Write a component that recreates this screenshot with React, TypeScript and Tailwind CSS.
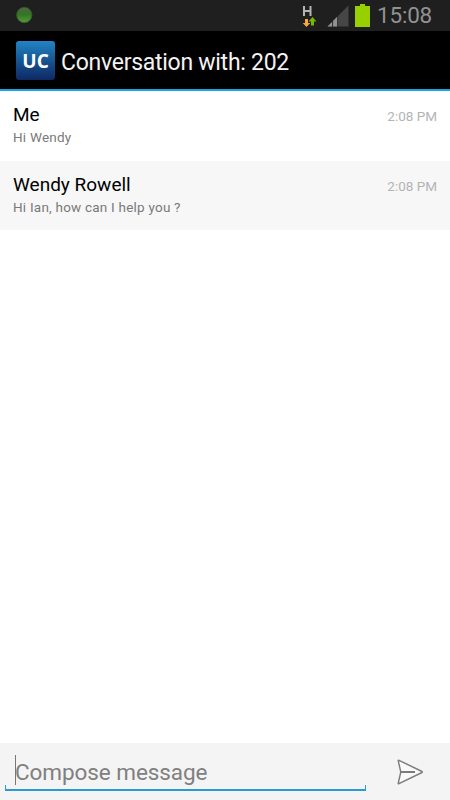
import React from 'react'

type Message = {
  sender: string
  text: string
  time: string
}

const messages: Message[] = [
  { sender: 'Me', text: 'Hi Wendy', time: '2:08 PM' },
  { sender: 'Wendy Rowell', text: 'Hi Ian, how can I help you ?', time: '2:08 PM' },
]

function StatusBar() {
  return (
    <div className="flex h-[31px] shrink-0 items-start bg-[#1f1f1f]">
      <svg className="mt-[6px] ml-[15px] h-[18px] w-[18px]" viewBox="0 0 18 18">
        <defs>
          <linearGradient id="online" x1="0" y1="0" x2="0" y2="1">
            <stop offset="0" stopColor="#50654a" />
            <stop offset="0.45" stopColor="#347426" />
            <stop offset="1" stopColor="#529c37" />
          </linearGradient>
        </defs>
        <circle cx="9.3" cy="9" r="7.7" fill="url(#online)" stroke="#2b5923" strokeWidth="0.8" />
      </svg>

      {/* HSPA data */}
      <svg className="mt-[3px] ml-auto h-6 w-4" viewBox="0 0 16 24">
        <path d="M2 3v10M8.500 3v10M2 8h6.500" fill="none" stroke="#b4b4b4" strokeWidth="2" />
        <path d="M3 16h3v4h2.300l-3.800 4L0.700 20H3z" fill="#fca43a" />
        <path d="M10.500 14l4 4.400h-2.500v4H9v-4H6.500z" fill="#77b800" />
      </svg>

      <svg className="mt-[5px] ml-[9px] h-[22px] w-[22px]" viewBox="0 0 22 22">
        <path d="M0.5 21.5L21.5 0.5v21z" fill="#464646" />
        <path d="M0.5 21.5L5 17v4.500zM6 16l4.200-4.200v9.700H6z" fill="#929292" />
        <path d="M5.600 15v7M10.600 10v12" stroke="#2c2c2c" strokeWidth="0.8" />
      </svg>

      <svg className="mt-[3px] ml-[6px] h-6 w-4" viewBox="0 0 16 24">
        <path d="M5 1h5v2h5v21H0V3h5z" fill="#98cf00" />
      </svg>

      <span className="mt-[2px] mr-[17px] ml-[6px] w-[56px] text-[22.500px] leading-[26px] tracking-[-0.2px] whitespace-nowrap text-[#929292]">
        15:08
      </span>
    </div>
  )
}

function TitleBar() {
  return (
    <header className="flex h-[60px] shrink-0 items-center border-b-2 border-[#12a9df] bg-black pl-4">
      <div className="mt-px flex h-[39px] w-[39px] items-center justify-center rounded-[3px] border-t border-[#3878cc] bg-linear-to-b from-[#2182c1] to-[#0e2964]">
        <span className="font-['Open_Sans'] text-[19px] leading-none font-bold text-white">UC</span>
      </div>
      <h1 className="mt-[6px] ml-[6px] text-[23px] leading-7 tracking-[-0.270px] whitespace-nowrap text-[#f3f3f3]">
        Conversation with: 202
      </h1>
    </header>
  )
}

function MessageRow({ message }: { message: Message }) {
  return (
    <li className="flex h-[70px] items-start justify-between pt-3 pr-[13px] pl-[13px] even:h-[69px] even:bg-[#f7f7f7]">
      <div>
        <p className="text-[19px] leading-6 text-black">{message.sender}</p>
        <p className="text-[13.500px] leading-5 tracking-[0.220px] text-[#7a7a7a]">{message.text}</p>
      </div>
      <time className="mt-[3px] text-[13.500px] leading-5 text-[#b4b4b4]">{message.time}</time>
    </li>
  )
}

function Composer() {
  return (
    <footer className="flex h-[57px] shrink-0 items-start bg-[#f4f4f4] pl-[5px]">
      <div className="flex h-12 w-[361px] flex-col">
        <div className="flex h-[43px] items-end pl-[10px]">
          <span className="h-[30px] w-px bg-[#777]" />
          <span className="-ml-px mb-[-2px] text-[22.500px] leading-[30px] tracking-[-0.070px] whitespace-nowrap text-[#808080]">
            Compose message
          </span>
        </div>
        <div className="mt-auto h-[6px] border-x border-b-2 border-[#2a9bd0]" />
      </div>
      <button className="mt-[15px] ml-[30px] h-7 w-7" aria-label="Send">
        <svg className="h-7 w-7" viewBox="0 0 28 28" fill="none" stroke="#7c7c7c" strokeWidth="1.400" strokeLinejoin="round">
          <path d="M3 2.300Q2 2 2.300 3L4.800 14L2.300 25Q2 26.200 3 25.700L26 14.500Q26.800 14 26 13.500z" fill="#f9f9f9" />
          <path d="M5 14h14" strokeWidth="2" />
        </svg>
      </button>
    </footer>
  )
}

export default function App() {
  return (
    <div className="flex h-[800px] w-[450px] flex-col overflow-hidden bg-white font-[Roboto,sans-serif]">
      <StatusBar />
      <TitleBar />
      <ul className="flex-1">
        {messages.map((message) => (
          <MessageRow key={message.sender} message={message} />
        ))}
      </ul>
      <Composer />
    </div>
  )
}
